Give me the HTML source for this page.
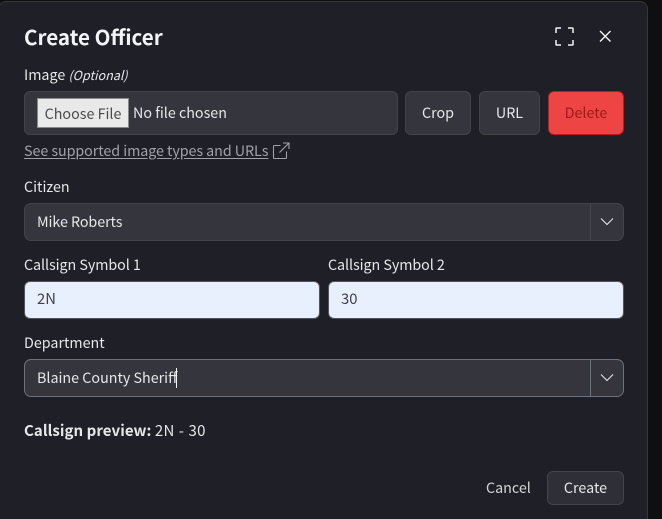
<!DOCTYPE html>
<html lang="en"><head><meta charset="utf-8"><title>Create Officer</title>
<style>
html,body{margin:0;padding:0;width:662px;height:519px;overflow:hidden;background:#0f0f11}
body{position:relative;font-family:"Noto Sans CJK JP","Liberation Sans",sans-serif;font-size:14.3px;color:#e5e7eb}
*{box-sizing:border-box}
.a{position:absolute;white-space:nowrap}
#d{position:absolute;left:-2px;top:1px;width:650px;height:530px;background:#1f1f27;border:1px solid #35353b;border-radius:8px}
.box{position:absolute;background:#35353d;border:1px solid #43434a;border-radius:6px}
.inp{position:absolute;background:#e8f0fe;border:1px solid #52525b;border-radius:6px;color:#3f3f46;padding-left:12px;line-height:34px;height:38px;font-size:14.8px}
.btn{display:flex;align-items:center;justify-content:center;color:#e5e7eb}
.l{line-height:20px;height:20px}
</style></head><body>
<div id="d"></div>
<div class="a" style="left:24px;top:20px;font-size:20.6px;font-weight:700;line-height:32px;color:#f3f4f6">Create Officer</div>
<svg class="a" style="left:555px;top:27px" width="19" height="19" viewBox="0 0 19 19" fill="none" stroke="#f3f4f6" stroke-width="1.5"><path d="M1 6V1.800Q1 1 1.800 1H6M13 1h4.200q.8 0 .8.8V6M18 13v4.200q0 .8-.8.8H13M6 18H1.800Q1 18 1 17.200V13"/></svg>
<svg class="a" style="left:599px;top:30px" width="13" height="13" viewBox="0 0 13 13" fill="none" stroke="#f3f4f6" stroke-width="1.4"><path d="M1 1l10.500 10.500M11.500 1L1 11.500"/></svg>
<div class="a l" style="left:24px;top:65px">Image <i style="font-size:12.5px">(Optional)</i></div>
<div class="box" style="left:24px;top:91px;width:374px;height:44px"></div>
<div class="a btn" style="left:37px;top:98px;width:92px;height:30px;background:#e9e9e9;border:1px solid #8a8a8a;color:#4b4b4b">Choose File</div>
<div class="a l" style="left:133px;top:103px">No file chosen</div>
<div class="box btn" style="left:405px;top:91px;width:66px;height:44px;padding-bottom:1px">Crop</div>
<div class="box btn" style="left:479px;top:91px;width:61px;height:44px;padding-bottom:1px">URL</div>
<div class="a btn" style="left:548px;top:91px;width:76px;height:44px;background:#ef4444;border:1px solid #b91c1c;border-radius:6px;color:#991b1b;padding-bottom:1px">Delete</div>
<div class="a l" style="left:24px;top:141px;color:#a1a1aa;text-decoration:underline;text-underline-offset:2px;letter-spacing:-.06px">See supported image types and URLs</div>
<svg class="a" style="left:272px;top:142px" width="18" height="18" viewBox="0 0 18 18" fill="none" stroke="#a1a1aa" stroke-width="1.1"><path d="M8.500 3.500H2.500Q1.500 3.500 1.500 4.500V15.500Q1.500 16.500 2.500 16.500H13.500Q14.500 16.500 14.500 15.500V9.500M11 1H17V7M17 1L7.500 10.500"/></svg>
<div class="a l" style="left:24px;top:177px">Citizen</div>
<div class="box" style="left:24px;top:203px;width:600px;height:38px;border-radius:7px"></div>
<div class="a" style="left:590px;top:204px;width:1px;height:36px;background:#43434a"></div>
<div class="a l" style="left:37px;top:212px;letter-spacing:-.06px">Mike Roberts</div>
<svg class="a" style="left:600px;top:216px" width="14" height="12" viewBox="0 0 14 12" fill="none" stroke="#e5e7eb" stroke-width="1.1"><path d="M1 2.500L7 8.500L13 2.500"/></svg>
<div class="a l" style="left:24px;top:255px;letter-spacing:-.06px">Callsign Symbol 1</div>
<div class="a l" style="left:328px;top:255px;letter-spacing:-.06px">Callsign Symbol 2</div>
<div class="inp" style="left:24px;top:281px;width:296px">2N</div>
<div class="inp" style="left:328px;top:281px;width:296px">30</div>
<div class="a l" style="left:24px;top:333px">Department</div>
<div class="box" style="left:24px;top:359px;width:600px;height:38px;border-radius:7px;border-color:#6b7280"></div>
<div class="a" style="left:590px;top:360px;width:1px;height:36px;background:#6b7280"></div>
<div class="a l" style="left:37px;top:368px">Blaine County Sheriff</div>
<div class="a" style="left:176px;top:368px;width:1px;height:20px;background:#f3f4f6"></div>
<svg class="a" style="left:600px;top:372px" width="14" height="12" viewBox="0 0 14 12" fill="none" stroke="#e5e7eb" stroke-width="1.1"><path d="M1 2.500L7 8.500L13 2.500"/></svg>
<div class="a l" style="left:24px;top:421px;font-size:15px"><b style="letter-spacing:.06px">Callsign preview:</b> <span style="letter-spacing:.3px;word-spacing:.5px">2N - 30</span></div>
<div class="a l" style="left:486px;top:478px;color:#d4d4d8">Cancel</div>
<div class="box btn" style="left:547px;top:471px;width:77px;height:34px;background:#2f2f37;padding-bottom:1px">Create</div>
</body></html>
